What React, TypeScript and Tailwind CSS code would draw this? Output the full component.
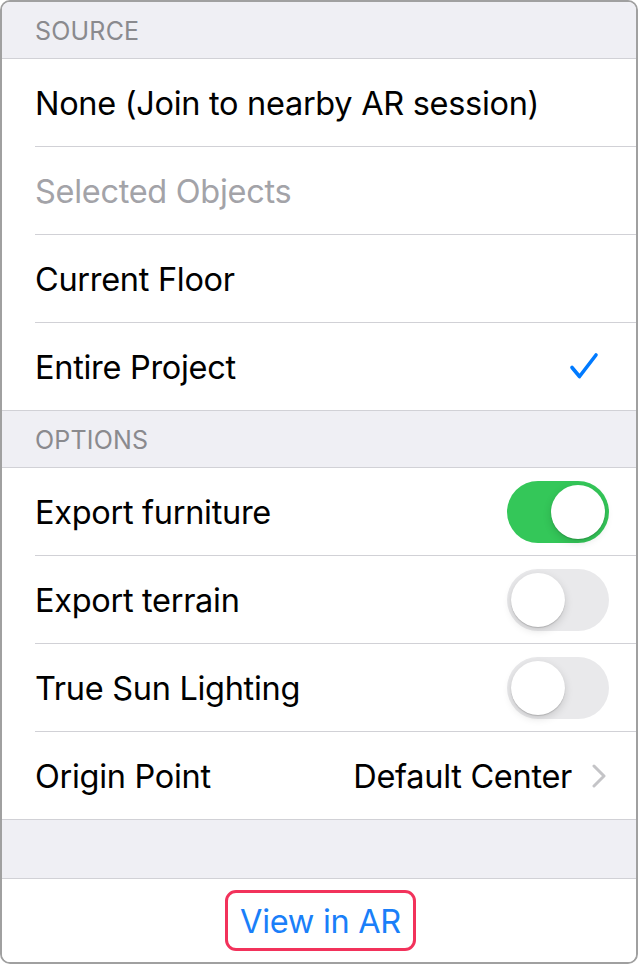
import React from "react";

const font = { fontFamily: "Inter, 'Noto Sans', sans-serif" };

const SectionHeader = ({ title }: { title: string }) => (
  <div className="flex h-[56px] items-center bg-[#efeff4] px-[33px] pt-[3px] text-[25px] tracking-[0.2px] text-[#8a8a8e]">
    {title}
  </div>
);

const Separator = ({ inset }: { inset?: boolean }) => (
  <div className={inset ? "bg-white pl-[33px]" : ""}>
    <div className="h-px bg-[#d1d1d6]" />
  </div>
);

const Toggle = ({ on }: { on?: boolean }) => (
  <div
    className={
      on
        ? "flex h-[62px] w-[102px] items-center justify-end rounded-full bg-[#34c759] px-[4px]"
        : "flex h-[62px] w-[102px] items-center justify-start rounded-full bg-[#e9e9eb] px-[4px]"
    }
  >
    <div className="h-[54px] w-[54px] rounded-full bg-white shadow-[0_3px_8px_rgba(0,0,0,0.15),0_1px_1px_rgba(0,0,0,0.16)]" />
  </div>
);

const Row = ({
  label,
  muted,
  children,
}: {
  label: string;
  muted?: boolean;
  children?: React.ReactNode;
}) => (
  <div className="flex h-[87px] items-center justify-between bg-white pl-[33px] pr-[27px]">
    <span className={muted ? "pt-[4px] text-[#a3a3a8]" : "pt-[4px] text-black"}>{label}</span>
    {children}
  </div>
);

export default function App() {
  return (
    <div
      style={font}
      className="flex h-[964px] w-[638px] flex-col overflow-hidden rounded-[10px] border-2 border-[#a0a0a0] bg-white text-[32.5px] tracking-[-0.3px]"
    >
      <SectionHeader title="SOURCE" />
      <Separator />
      <Row label="None (Join to nearby AR session)" />
      <Separator inset />
      <Row label="Selected Objects" muted />
      <Separator inset />
      <Row label="Current Floor" />
      <Separator inset />
      <Row label="Entire Project">
        <svg width="32" height="30" viewBox="0 0 32 30" className="mr-[9px]">
          <path
            d="M4 15.5 L11.5 24.5 L28 3"
            fill="none"
            stroke="#007aff"
            strokeWidth="3.6"
            strokeLinecap="round"
            strokeLinejoin="round"
          />
        </svg>
      </Row>
      <Separator />

      <SectionHeader title="OPTIONS" />
      <Separator />
      <Row label="Export furniture">
        <Toggle on />
      </Row>
      <Separator inset />
      <Row label="Export terrain">
        <Toggle />
      </Row>
      <Separator inset />
      <Row label="True Sun Lighting">
        <Toggle />
      </Row>
      <Separator inset />
      <Row label="Origin Point">
        <div className="flex items-center gap-[20px]">
          <span className="pt-[4px] text-black">Default Center</span>
          <svg width="14" height="24" viewBox="0 0 14 24" className="mr-[3px]">
            <path
              d="M2 2 L12 12 L2 22"
              fill="none"
              stroke="#c4c4c7"
              strokeWidth="3"
              strokeLinecap="round"
              strokeLinejoin="round"
            />
          </svg>
        </div>
      </Row>
      <Separator />

      <div className="h-[58px] bg-[#efeff4]" />
      <Separator />

      <div className="flex flex-1 items-center justify-center bg-white">
        <button className="ml-[3px] flex h-[61px] items-center rounded-[11px] border-[3px] border-[#f2325b] px-[12px] pt-[3px] text-[32.5px] text-[#1a7ff9]">
          View in AR
        </button>
      </div>
    </div>
  );
}
